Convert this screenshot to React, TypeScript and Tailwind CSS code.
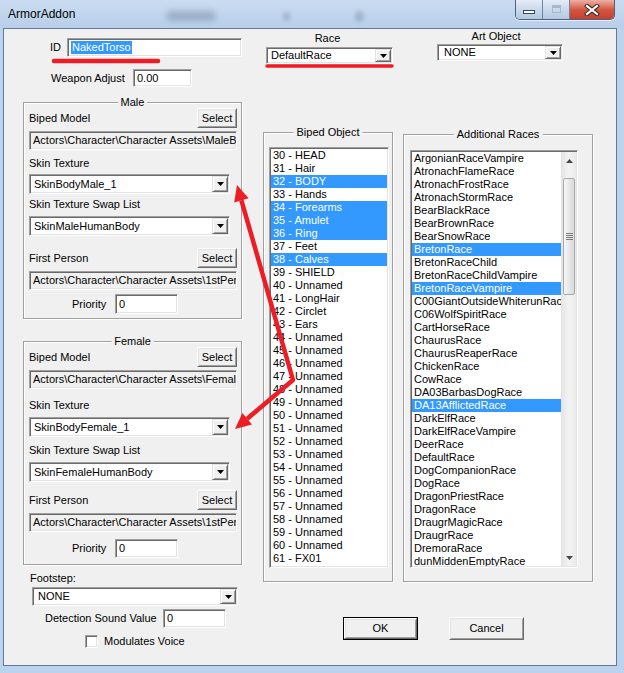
import React from 'react'

const bipedNames: Record<number, string> = {
  30: 'HEAD',
  31: 'Hair',
  32: 'BODY',
  33: 'Hands',
  34: 'Forearms',
  35: 'Amulet',
  36: 'Ring',
  37: 'Feet',
  38: 'Calves',
  39: 'SHIELD',
  41: 'LongHair',
  42: 'Circlet',
  43: 'Ears',
  61: 'FX01',
}
const bipedSelected = [32, 34, 35, 36, 38]
const bipedItems = Array.from({ length: 32 }, (_, i) => 30 + i)

const races = [
  'ArgonianRaceVampire',
  'AtronachFlameRace',
  'AtronachFrostRace',
  'AtronachStormRace',
  'BearBlackRace',
  'BearBrownRace',
  'BearSnowRace',
  'BretonRace',
  'BretonRaceChild',
  'BretonRaceChildVampire',
  'BretonRaceVampire',
  'C00GiantOutsideWhiterunRace',
  'C06WolfSpiritRace',
  'CartHorseRace',
  'ChaurusRace',
  'ChaurusReaperRace',
  'ChickenRace',
  'CowRace',
  'DA03BarbasDogRace',
  'DA13AfflictedRace',
  'DarkElfRace',
  'DarkElfRaceVampire',
  'DeerRace',
  'DefaultRace',
  'DogCompanionRace',
  'DogRace',
  'DragonPriestRace',
  'DragonRace',
  'DraugrMagicRace',
  'DraugrRace',
  'DremoraRace',
  'dunMiddenEmptyRace',
]
const racesSelected = ['BretonRace', 'BretonRaceVampire', 'DA13AfflictedRace']

type BoxProps = { className?: string; children?: React.ReactNode }

// classic sunken edge (edit, combo, list)
function Sunken({ className = '', children }: BoxProps) {
  return (
    <div
      className={`border border-t-[#a0a0a0] border-l-[#a0a0a0] border-r-white border-b-white shadow-[inset_1px_1px_0_#696969,inset_-1px_-1px_0_#e3e3e3] ${className}`}
    >
      {children}
    </div>
  )
}

function TextBox({ className = '', gray, children }: BoxProps & { gray?: boolean }) {
  return (
    <Sunken
      className={`flex items-center pl-[3px] overflow-hidden whitespace-nowrap ${gray ? 'bg-[#f0f0f0]' : 'bg-white'} ${className}`}
    >
      {children}
    </Sunken>
  )
}

function Arrow({ up }: { up?: boolean }) {
  return (
    <svg width="7" height="4" viewBox="0 0 7 4">
      <path d={up ? 'M0 4H7L3.5 0Z' : 'M0 0H7L3.5 4Z'} fill="#000" />
    </svg>
  )
}

function Combo({ value, className = '', pad = 'pl-[3px]' }: { value: string; className?: string; pad?: string }) {
  return (
    <Sunken className={`flex items-stretch bg-white p-[1px] ${className}`}>
      <span className={`flex-1 flex items-center whitespace-nowrap overflow-hidden ${pad}`}>{value}</span>
      <div className="w-[16px] bg-[#f0f0f0] border border-t-[#e3e3e3] border-l-[#e3e3e3] border-r-[#696969] border-b-[#696969] shadow-[inset_1px_1px_0_#fff,inset_-1px_-1px_0_#a0a0a0] flex items-center justify-center">
        <Arrow />
      </div>
    </Sunken>
  )
}

function PushButton({ className = '', children }: BoxProps) {
  return (
    <div
      className={`bg-[#f0f0f0] border border-t-white border-l-white border-r-[#696969] border-b-[#696969] shadow-[inset_1px_1px_0_#e3e3e3,inset_-1px_-1px_0_#a0a0a0] flex items-center justify-center ${className}`}
    >
      {children}
    </div>
  )
}

function Group({ title, className = '', children }: BoxProps & { title: string }) {
  return (
    <div className={`relative border border-[#a0a0a0] shadow-[inset_1px_1px_0_#fff,1px_1px_0_#fff] ${className}`}>
      <span className="absolute left-1/2 top-[-7px] -translate-x-1/2 bg-[#f0f0f0] px-[3px] leading-[13px] whitespace-nowrap">
        {title}
      </span>
      {children}
    </div>
  )
}

function Label({ className = '', children }: BoxProps) {
  return <div className={`h-[13px] leading-[13px] whitespace-nowrap ${className}`}>{children}</div>
}

function GenderGroup({
  title,
  className,
  model,
  firstPerson,
  skin,
  swap,
  gaps,
}: {
  title: string
  className: string
  model: string
  firstPerson: string
  skin: string
  swap: string
  gaps: { label1: string; combo1: string; label2: string; combo2: string; row: string; prio: string; prioH: string }
}) {
  return (
    <Group title={title} className={`pl-[5px] pr-[4px] pt-[5px] flex flex-col ${className}`}>
      <div className="flex items-center justify-between h-[20px]">
        <span>Biped Model</span>
        <PushButton className="w-[40px] h-[20px]">Select</PushButton>
      </div>
      <TextBox gray className="mt-[3px] h-[19px] w-full">
        {model}
      </TextBox>
      <Label className={gaps.label1}>Skin Texture</Label>
      <Combo value={skin} className={`${gaps.combo1} w-[201px] h-[20px]`} />
      <Label className={gaps.label2}>Skin Texture Swap List</Label>
      <Combo value={swap} className={`${gaps.combo2} w-[201px] h-[20px]`} />
      <div className={`flex items-center justify-between h-[20px] ${gaps.row}`}>
        <span>First Person</span>
        <PushButton className="w-[40px] h-[20px]">Select</PushButton>
      </div>
      <TextBox gray className="mt-[3px] h-[19px] w-full">
        {firstPerson}
      </TextBox>
      <div className={`flex items-center ${gaps.prio}`}>
        <span className="w-[86px] pl-[43px]">Priority</span>
        <TextBox className={`w-[63px] ${gaps.prioH}`}>0</TextBox>
      </div>
    </Group>
  )
}

export default function App() {
  return (
    <div className="relative w-[624px] h-[673px] overflow-hidden bg-[#bcd3ee] flex flex-col font-['Liberation_Sans',Arial,sans-serif] text-[11px] text-black">
      {/* title bar */}
      <div className="relative h-[28px] flex items-start bg-linear-to-b from-[#cadcf1] to-[#b8cfea]">
        <div className="absolute left-[166px] top-[11px] w-[50px] h-[10px] rounded-full bg-[#8393aa] opacity-60 blur-[3px]" />
        <div className="absolute left-[283px] top-[12px] w-[7px] h-[9px] rounded-full bg-[#8393aa] opacity-50 blur-[2px]" />
        <div className="absolute left-[355px] top-[11px] w-[9px] h-[11px] rounded-full bg-[#8393aa] opacity-50 blur-[2px]" />
        <span className="relative pl-[8px] pt-[7px] text-[12px] leading-[15px] text-black">ArmorAddon</span>
        <div className="relative ml-auto mr-[9px] flex h-[20px] rounded-b-[5px] overflow-hidden border border-t-0 border-[#4e6180] shadow-[0_1px_0_rgba(255,255,255,0.6)]">
          <div className="w-[27px] border-r border-[#6f819b] bg-linear-to-b from-[#e4ecf7] via-[#cbd9ec] to-[#b3c8e2] flex justify-center">
            <div className="mt-[10px] w-[12px] h-[4px] bg-white border border-[#34465f]" />
          </div>
          <div className="w-[27px] border-r border-[#6f819b] bg-linear-to-b from-[#e4ecf7] via-[#cbd9ec] to-[#b3c8e2] flex justify-center">
            <div className="mt-[5px] w-[9px] h-[8px] border border-[#a7b7cc] shadow-[inset_0_2px_0_#a7b7cc]" />
          </div>
          <div className="w-[44px] bg-linear-to-b from-[#eab0a4] via-[#d35744] to-[#c6402c] flex justify-center items-center">
            <svg width="16" height="12" viewBox="0 0 16 12">
              <path d="M3 2L13 10M13 2L3 10" stroke="#3b2a28" strokeWidth="4.2" strokeLinecap="square" />
              <path d="M3 2L13 10M13 2L3 10" stroke="#fff" strokeWidth="2.2" strokeLinecap="square" />
            </svg>
          </div>
        </div>
      </div>

      <div className="flex h-[638px]">
        <div className="w-[3px]" />
        {/* client area */}
        <div className="w-[614px] h-[638px] border border-[#62799a] bg-[#f0f0f0] flex pl-[19px]">
          {/* left column */}
          <div className="w-[219px] flex flex-col">
            <div className="mt-[9px] flex items-center h-[19px]">
              <span className="pl-[27px]">ID</span>
              <TextBox className="ml-auto w-[175px] h-[19px] pl-[2px]">
                <span className="bg-[#3399ff] text-white leading-[13px] px-[1px]">NakedTorso</span>
              </TextBox>
            </div>
            <div className="mt-[12px] flex items-center h-[18px]">
              <span className="w-[110px] pl-[28px]">Weapon Adjust</span>
              <TextBox className="w-[59px] h-[18px]">0.00</TextBox>
            </div>

            <GenderGroup
              title="Male"
              className="mt-[15px] h-[217px]"
              model="Actors\Character\Character Assets\MaleB"
              firstPerson="Actors\Character\Character Assets\1stPer"
              skin="SkinBodyMale_1"
              swap="SkinMaleHumanBody"
              gaps={{
                label1: 'mt-[7px]',
                combo1: 'mt-[4px]',
                label2: 'mt-[4px]',
                combo2: 'mt-[5px]',
                row: 'mt-[12px]',
                prio: 'mt-[4px]',
                prioH: 'h-[20px]',
              }}
            />
            <GenderGroup
              title="Female"
              className="mt-[22px] h-[224px]"
              model="Actors\Character\Character Assets\Female"
              firstPerson="Actors\Character\Character Assets\1stPer"
              skin="SkinBodyFemale_1"
              swap="SkinFemaleHumanBody"
              gaps={{
                label1: 'mt-[10px]',
                combo1: 'mt-[5px]',
                label2: 'mt-[7px]',
                combo2: 'mt-[5px]',
                row: 'mt-[8px]',
                prio: 'mt-[7px]',
                prioH: 'h-[19px]',
              }}
            />

            <Label className="mt-[7px] pl-[7px]">Footstep:</Label>
            <Combo value="NONE" className="mt-[2px] ml-[9px] w-[206px] h-[19px]" pad="pl-[4px]" />
            <div className="mt-[3px] flex items-center h-[19px]">
              <span className="w-[140px] pl-[22px]">Detection Sound Value</span>
              <TextBox className="w-[63px] h-[19px]">0</TextBox>
            </div>
            <div className="mt-[7px] flex items-center h-[13px]">
              <Sunken className="ml-[62px] w-[13px] h-[13px] bg-white" />
              <span className="ml-[6px]">Modulates Voice</span>
            </div>
          </div>

          {/* right part */}
          <div className="ml-[21px] w-[330px] flex flex-col">
            <div className="h-[103px] flex items-start">
              <div className="ml-[3px] w-[127px] flex flex-col">
                <Label className="mt-[3px] text-center pr-[4px]">Race</Label>
                <Combo value="DefaultRace" className="mt-[2px] h-[17px]" />
              </div>
              <div className="ml-[44px] w-[126px] flex flex-col">
                <Label className="mt-[1px] text-center pr-[8px]">Art Object</Label>
                <Combo value="NONE" className="mt-[1px] h-[17px]" pad="pl-[5px]" />
              </div>
            </div>

            <div className="h-[450px] flex items-start">
              <Group title="Biped Object" className="w-[130px] h-[450px] pl-[5px] pt-[14px]">
                <Sunken className="w-[120px] h-[421px] bg-white p-[1px] overflow-hidden">
                  {bipedItems.map((n) => {
                    const sel = bipedSelected.includes(n)
                    return (
                      <div
                        key={n}
                        className={`h-[13px] leading-[13px] pl-[2px] whitespace-nowrap ${sel ? 'bg-[#3399ff] text-white' : ''}`}
                      >
                        {n} - {bipedNames[n] || 'Unnamed'}
                      </div>
                    )
                  })}
                </Sunken>
              </Group>

              <Group title="Additional Races" className="ml-[10px] mt-[2px] w-[190px] h-[448px] pl-[6px] pt-[15px]">
                <Sunken className="w-[168px] h-[418px] bg-white p-[1px] flex overflow-hidden">
                  <div className="flex-1 overflow-hidden">
                    {races.map((r) => {
                      const sel = racesSelected.includes(r)
                      return (
                        <div
                          key={r}
                          className={`h-[13px] leading-[13px] pl-[2px] whitespace-nowrap ${sel ? 'bg-[#3399ff] text-white' : ''}`}
                        >
                          {r}
                        </div>
                      )
                    })}
                  </div>
                  {/* scrollbar */}
                  <div className="w-[15px] flex flex-col bg-linear-to-r from-[#e6e6e6] via-[#f3f3f3] to-[#eaeaea] border-l border-[#e2e2e2]">
                    <div className="h-[17px] flex items-center justify-center opacity-70">
                      <Arrow up />
                    </div>
                    <div className="h-[9px]" />
                    <div className="h-[117px] mx-[1px] rounded-[2px] border border-[#a8a8a8] bg-linear-to-r from-[#f6f6f6] to-[#dadada] flex flex-col items-center justify-center gap-[1px]">
                      <div className="w-[7px] h-[1px] bg-[#7a7a7a]" />
                      <div className="w-[7px] h-[1px] bg-[#7a7a7a]" />
                      <div className="w-[7px] h-[1px] bg-[#7a7a7a]" />
                      <div className="w-[7px] h-[1px] bg-[#7a7a7a]" />
                    </div>
                    <div className="flex-1" />
                    <div className="h-[17px] flex items-center justify-center opacity-70">
                      <Arrow />
                    </div>
                  </div>
                </Sunken>
              </Group>
            </div>

            <div className="mt-[35px] flex">
              <div className="ml-[80px] w-[75px] h-[23px] border border-black flex">
                <PushButton className="flex-1">OK</PushButton>
              </div>
              <PushButton className="ml-[31px] w-[75px] h-[23px]">Cancel</PushButton>
            </div>
          </div>
        </div>
        <div className="w-[7px]" />
      </div>

      {/* red annotations */}
      <svg className="absolute inset-0 pointer-events-none" width="624" height="673" viewBox="0 0 624 673">
        <line x1="54" y1="61" x2="158" y2="61" stroke="#ee1c24" strokeWidth="4.5" strokeLinecap="round" />
        <line x1="267" y1="66" x2="392" y2="66" stroke="#ee1c24" strokeWidth="3.5" strokeLinecap="round" />
        <polyline
          points="241.4,200.4 293,380 247.2,418.7"
          fill="none"
          stroke="#ee1c24"
          strokeWidth="4.5"
          strokeLinejoin="round"
        />
        <polygon points="237,185 248.6,198.3 234.2,202.5" fill="#ee1c24" />
        <polygon points="235,429 242.4,413 252,424.4" fill="#ee1c24" />
      </svg>
    </div>
  )
}
